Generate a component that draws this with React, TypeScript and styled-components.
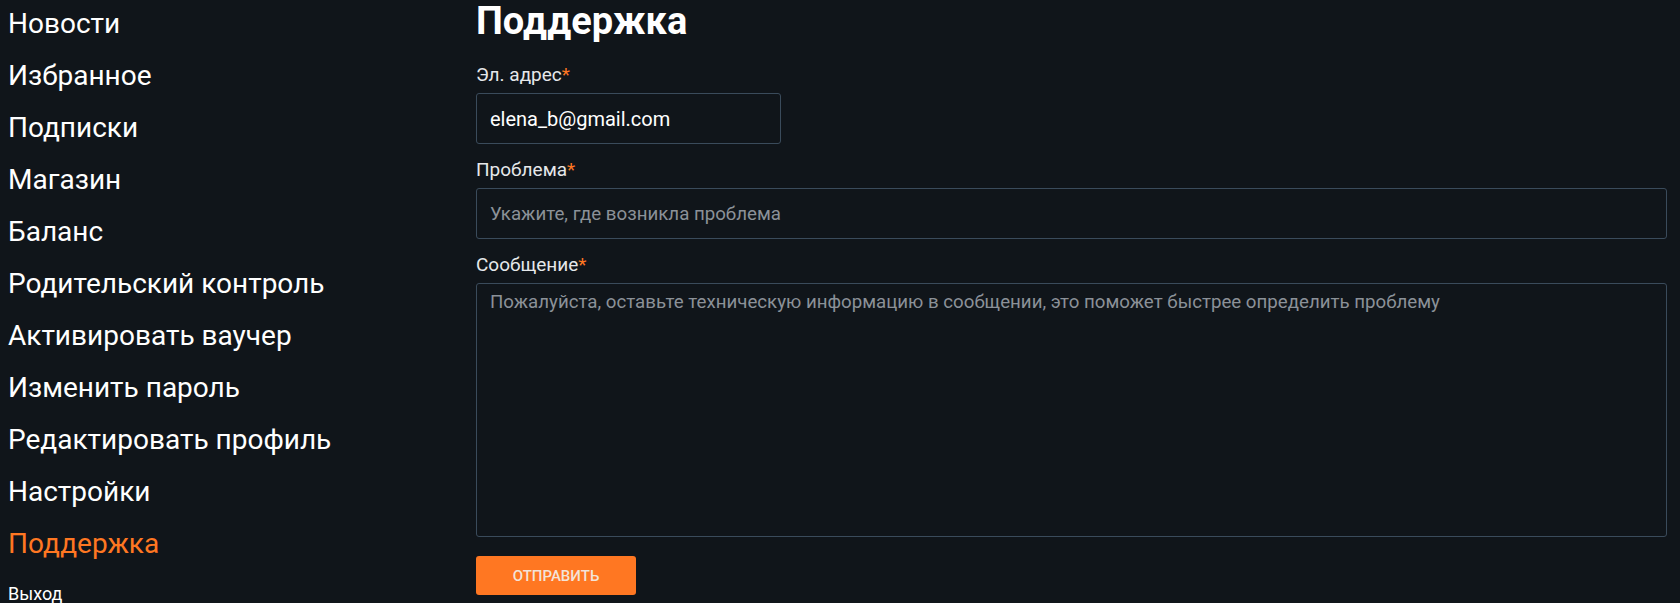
import styled, { createGlobalStyle } from "styled-components";

const GlobalStyle = createGlobalStyle`
  html, body {
    margin: 0;
    padding: 0;
    background: #10151a;
  }
  body {
    font-family: Roboto, "Liberation Sans", sans-serif;
    color: #ffffff;
  }
  * {
    box-sizing: border-box;
  }
`;

const colors = {
  bg: "#10151a",
  text: "#ffffff",
  label: "#e6e8ea",
  orange: "#ff7722",
  border: "#3a4b5b",
  placeholder: "#8b9198",
};

const Layout = styled.div`
  display: grid;
  grid-template-columns: 468px 1fr;
  padding: 0 13px 0 8px;
  min-height: 603px;
`;

const Sidebar = styled.nav`
  display: flex;
  flex-direction: column;
  gap: 4px;
`;

const NavItem = styled.a<{ $active?: boolean }>`
  font-size: 28px;
  line-height: 48px;
  font-weight: 400;
  color: ${(p) => (p.$active ? colors.orange : colors.text)};
  text-decoration: none;
  cursor: pointer;
`;

const LogoutLink = styled.a`
  margin-top: 11px;
  font-size: 18px;
  line-height: 21px;
  color: ${colors.text};
  text-decoration: none;
  cursor: pointer;
`;

const Main = styled.main`
  display: flex;
  flex-direction: column;
`;

const Title = styled.h1`
  margin: 0 0 21px;
  font-size: 38px;
  line-height: 42px;
  font-weight: 700;
  color: ${colors.text};
`;

const Field = styled.div`
  display: flex;
  flex-direction: column;
  margin-bottom: 14px;
`;

const Label = styled.label`
  margin-bottom: 7px;
  font-size: 19px;
  line-height: 23px;
  color: ${colors.label};
`;

const Star = styled.span`
  color: ${colors.orange};
`;

const TextInput = styled.input<{ $width?: string; $filled?: boolean }>`
  width: ${(p) => p.$width || "100%"};
  height: 51px;
  padding: 0 13px;
  background: transparent;
  border: 1px solid ${colors.border};
  border-radius: 3px;
  font-family: inherit;
  font-size: ${(p) => (p.$filled ? "20px" : "18.7px")};
  color: ${colors.text};
  outline: none;

  &::placeholder {
    color: ${colors.placeholder};
  }
`;

const TextArea = styled.textarea`
  width: 100%;
  height: 254px;
  padding: 7px 13px;
  background: transparent;
  border: 1px solid ${colors.border};
  border-radius: 3px;
  font-family: inherit;
  font-size: 18.7px;
  line-height: 1.2;
  color: ${colors.text};
  resize: none;
  outline: none;

  &::placeholder {
    color: ${colors.placeholder};
  }
`;

const SubmitButton = styled.button`
  margin-top: 5px;
  width: 160px;
  height: 39px;
  border: none;
  border-radius: 3px;
  background: ${colors.orange};
  color: #f3e3d8;
  font-family: inherit;
  font-size: 15px;
  font-weight: 500;
  text-transform: uppercase;
  cursor: pointer;
`;

const menu = [
  "Новости",
  "Избранное",
  "Подписки",
  "Магазин",
  "Баланс",
  "Родительский контроль",
  "Активировать ваучер",
  "Изменить пароль",
  "Редактировать профиль",
  "Настройки",
  "Поддержка",
];

const App: React.FC = () => {
  return (
    <>
      <GlobalStyle />
      <Layout>
        <Sidebar>
          {menu.map((item) => (
            <NavItem key={item} $active={item === "Поддержка"}>
              {item}
            </NavItem>
          ))}
          <LogoutLink>Выход</LogoutLink>
        </Sidebar>
        <Main>
          <Title>Поддержка</Title>
          <Field>
            <Label>
              Эл. адрес<Star>*</Star>
            </Label>
            <TextInput $width="305px" $filled defaultValue="elena_b@gmail.com" />
          </Field>
          <Field>
            <Label>
              Проблема<Star>*</Star>
            </Label>
            <TextInput placeholder="Укажите, где возникла проблема" />
          </Field>
          <Field>
            <Label>
              Сообщение<Star>*</Star>
            </Label>
            <TextArea placeholder="Пожалуйста, оставьте техническую информацию в сообщении, это поможет быстрее определить проблему" />
          </Field>
          <div>
            <SubmitButton>Отправить</SubmitButton>
          </div>
        </Main>
      </Layout>
    </>
  );
};

export default App;
